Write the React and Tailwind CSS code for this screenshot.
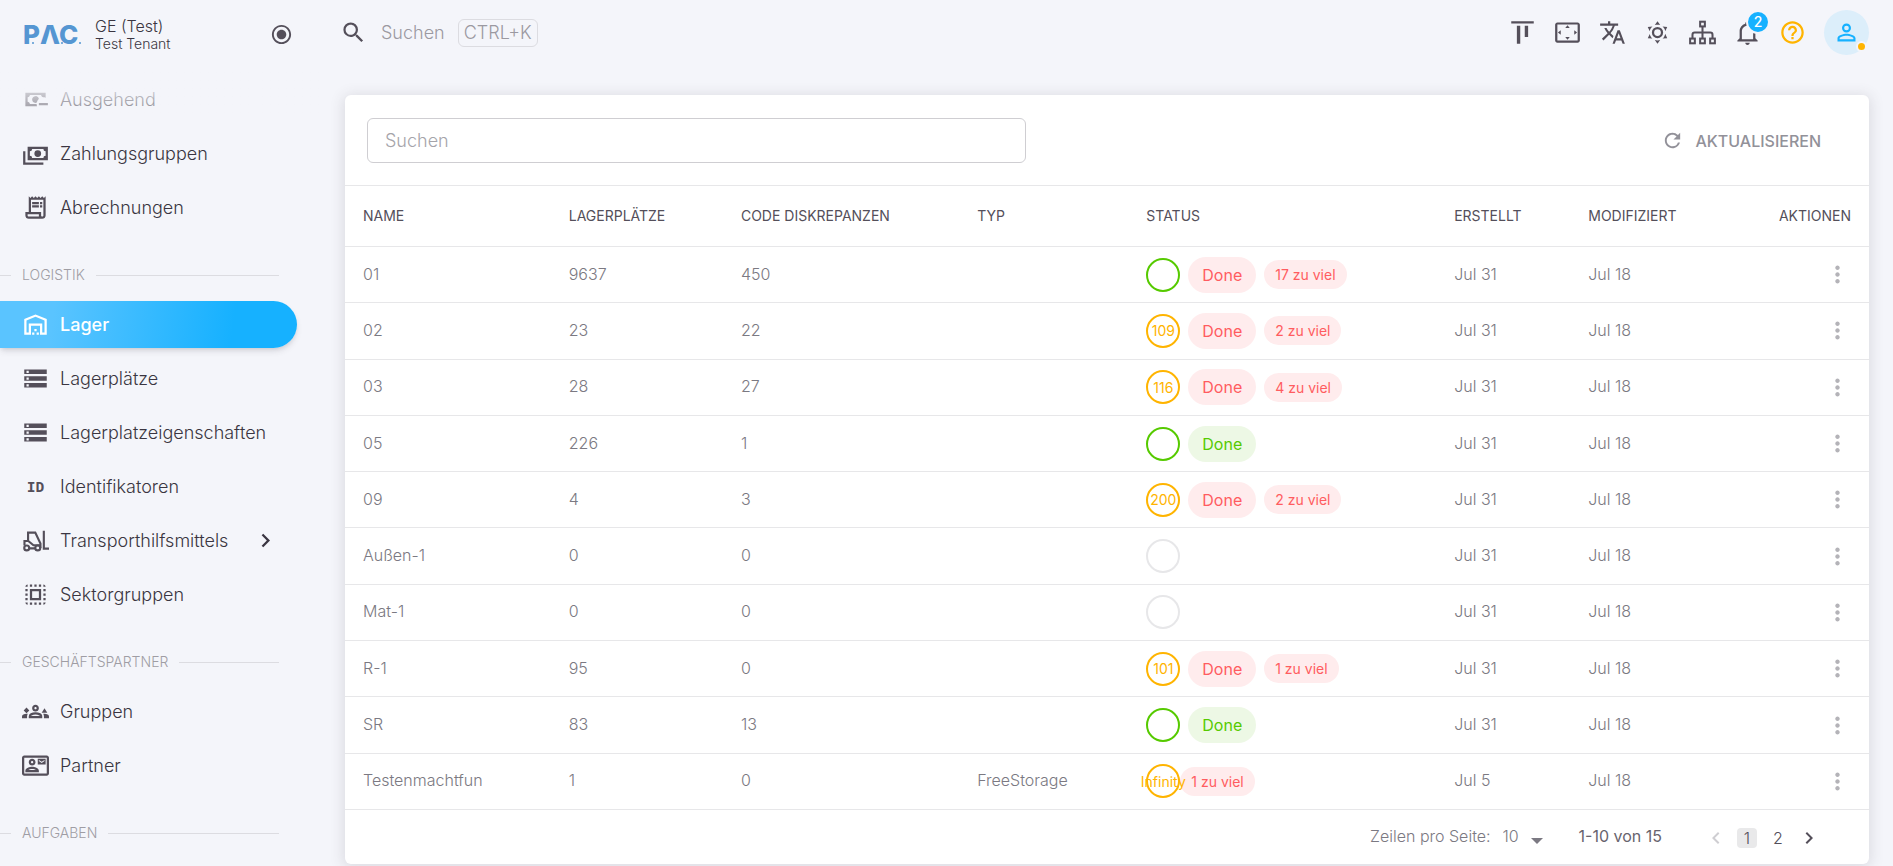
import React, { useState } from "react";
import {
  MdChevronLeft,
  MdChevronRight,
  MdHelpOutline,
  MdMoreVert,
  MdOutlineAlignVerticalTop,
  MdOutlineContactMail,
  MdOutlineGroups3,
  MdOutlineReceiptLong,
  MdOutlineSettingsOverscan,
  MdOutlineWarehouse,
  MdPersonOutline,
  MdRadioButtonChecked,
  MdRefresh,
  MdSearch,
  MdSelectAll,
  MdStorage,
  MdTranslate,
} from "react-icons/md";

function PathIcon({ d, className }) {
  return (
    <svg viewBox="0 0 24 24" fill="currentColor" className={className}>
      <path d={d} />
    </svg>
  );
}

function CashMinusIcon({ className }) {
  return (
    <PathIcon
      className={className}
      d="M15 15V17H23V15M14.97 11.61C14.85 10.28 13.59 8.97 12 9C10.3 9.03 9 10.3 9 12C9 13.7 10.3 14.94 12 15C12.38 15 12.77 14.92 13.14 14.77C13.41 13.67 13.86 12.63 14.97 11.61M13 16H7C7 14.9 6.1 14 5 14V10C6.1 10 7 9.1 7 8H17C17 9.1 17.9 10 19 10V10.06C19.67 10.06 20.34 10.18 21 10.4V6H3V18H13.32C13.1 17.33 13 16.66 13 16Z"
    />
  );
}

function CashMultipleIcon({ className }) {
  return (
    <PathIcon
      className={className}
      d="M5,6H23V18H5V6M14,9A3,3 0 0,1 17,12A3,3 0 0,1 14,15A3,3 0 0,1 11,12A3,3 0 0,1 14,9M9,8A2,2 0 0,1 7,10V14A2,2 0 0,1 9,16H19A2,2 0 0,1 21,14V10A2,2 0 0,1 19,8H9M1,10H3V20H19V22H1V10Z"
    />
  );
}

function SunIcon({ className }) {
  return (
    <PathIcon
      className={className}
      d="M12,7A5,5 0 0,1 17,12A5,5 0 0,1 12,17A5,5 0 0,1 7,12A5,5 0 0,1 12,7M12,9A3,3 0 0,0 9,12A3,3 0 0,0 12,15A3,3 0 0,0 15,12A3,3 0 0,0 12,9M12,2L14.39,5.42C13.65,5.15 12.84,5 12,5C11.16,5 10.35,5.15 9.61,5.42L12,2M3.34,7L7.5,6.65C6.9,7.16 6.36,7.78 5.94,8.5C5.5,9.24 5.25,10 5.11,10.79L3.34,7M3.36,17L5.12,13.23C5.26,14 5.53,14.78 5.95,15.5C6.37,16.24 6.91,16.86 7.5,17.37L3.36,17M20.65,7L18.88,10.79C18.74,10 18.47,9.23 18.05,8.5C17.63,7.78 17.1,7.15 16.5,6.64L20.65,7M20.64,17L16.5,17.36C17.09,16.85 17.62,16.22 18.04,15.5C18.46,14.77 18.73,14 18.87,13.21L20.64,17M12,22L9.59,18.56C10.33,18.83 11.14,19 12,19C12.82,19 13.63,18.83 14.37,18.56L12,22Z"
    />
  );
}

function BellIcon({ className }) {
  return (
    <PathIcon
      className={className}
      d="M10 21H14C14 22.1 13.1 23 12 23S10 22.1 10 21M21 19V20H3V19L5 17V11C5 7.9 7 5.2 10 4.3V4C10 2.9 10.9 2 12 2S14 2.9 14 4V4.3C17 5.2 19 7.9 19 11V17L21 19M17 11C17 8.2 14.8 6 12 6S7 8.2 7 11V18H17V11Z"
    />
  );
}

function SitemapIcon({ className }) {
  return (
    <svg
      viewBox="0 0 24 24"
      fill="none"
      stroke="currentColor"
      strokeWidth="1.8"
      className={className}
    >
      <rect x="9.9" y="2.4" width="4.2" height="4.2" />
      <rect x="1" y="17.4" width="4.2" height="4.2" />
      <rect x="9.9" y="17.4" width="4.2" height="4.2" />
      <rect x="18.8" y="17.4" width="4.2" height="4.2" />
      <path d="M12 6.6v10.8M3.1 17.4V14q0-2 2-2h13.8q2 0 2 2v3.4" />
    </svg>
  );
}

function ForkliftIcon({ className }) {
  return (
    <svg
      viewBox="0 0 24 24"
      fill="none"
      stroke="currentColor"
      strokeWidth="1.9"
      className={className}
    >
      <circle cx="4.2" cy="18.6" r="2.2" />
      <circle cx="14" cy="18.6" r="2.2" />
      <path d="M6.4 19h5.4M2.2 16.4v-4h3.4l4.6 3.8h6.2v2.4M5.4 12V5h6.4l4.6 9.6v1.6" />
      <path d="M19.4 3.4v15.8H24" />
    </svg>
  );
}

function IdentifierIcon({ className }) {
  return (
    <svg viewBox="0 0 24 24" fill="currentColor" className={className}>
      <text
        x="12"
        y="17"
        textAnchor="middle"
        fontFamily="DejaVu Sans Mono, monospace"
        fontWeight="700"
        fontSize="13"
      >
        ID
      </text>
    </svg>
  );
}

function Logo() {
  return (
    <svg
      viewBox="0 0 62 36"
      role="img"
      aria-label="PAC"
      fill="#5596d2"
      className="h-9 w-[62px] shrink-0"
      fontFamily="Inter, sans-serif"
      fontWeight="800"
      fontSize="26"
    >
      <text x="1" y="27">P</text>
      <text x="18" y="27">Λ</text>
      <text x="37" y="27">C</text>
      <circle cx="11" cy="26" r="1" />
      <circle cx="40" cy="26" r="1" />
      <circle cx="58" cy="26" r="1" />
    </svg>
  );
}

const navGroups = [
  {
    items: [
      { label: "Ausgehend", icon: CashMinusIcon },
      { label: "Zahlungsgruppen", icon: CashMultipleIcon },
      { label: "Abrechnungen", icon: MdOutlineReceiptLong },
    ],
  },
  {
    title: "Logistik",
    items: [
      { label: "Lager", icon: MdOutlineWarehouse, active: true },
      { label: "Lagerplätze", icon: MdStorage },
      { label: "Lagerplatzeigenschaften", icon: MdStorage },
      { label: "Identifikatoren", icon: IdentifierIcon },
      { label: "Transporthilfsmittels", icon: ForkliftIcon, nested: true },
      { label: "Sektorgruppen", icon: MdSelectAll },
    ],
  },
  {
    title: "Geschäftspartner",
    items: [
      { label: "Gruppen", icon: MdOutlineGroups3 },
      { label: "Partner", icon: MdOutlineContactMail },
    ],
  },
  { title: "Aufgaben", items: [] },
];

const rows = [
  { name: "01", places: 9637, diff: 450, ring: "ok", done: "error", extra: "17 zu viel" },
  { name: "02", places: 23, diff: 22, ring: "warn", value: "109", done: "error", extra: "2 zu viel" },
  { name: "03", places: 28, diff: 27, ring: "warn", value: "116", done: "error", extra: "4 zu viel" },
  { name: "05", places: 226, diff: 1, ring: "ok", done: "success" },
  { name: "09", places: 4, diff: 3, ring: "warn", value: "200", done: "error", extra: "2 zu viel" },
  { name: "Außen-1", places: 0, diff: 0, ring: "none" },
  { name: "Mat-1", places: 0, diff: 0, ring: "none" },
  { name: "R-1", places: 95, diff: 0, ring: "warn", value: "101", done: "error", extra: "1 zu viel" },
  { name: "SR", places: 83, diff: 13, ring: "ok", done: "success" },
  {
    name: "Testenmachtfun",
    places: 1,
    diff: 0,
    type: "FreeStorage",
    ring: "warn",
    value: "Infinity",
    extra: "1 zu viel",
    created: "Jul 5",
  },
];

const ringStyles = {
  ok: "border-[#56ca00]",
  warn: "border-[#ffb400]",
  none: "border-[#e7e7e9]",
};

const doneStyles = {
  error: "bg-[#ffeced] text-[#ff5c60]",
  success: "bg-[#edf8e5] text-[#56ca00]",
};

function NavItem({ item }) {
  const Icon = item.icon;

  return (
    <a
      href="#"
      className={`mt-[7px] flex h-[47px] w-[297px] items-center rounded-r-full pl-[22px] pr-[18px] ${
        item.active
          ? "bg-[linear-gradient(98deg,#5ac4ff_18%,#16b1ff_78%)] font-medium text-white shadow-md shadow-[#3a3541]/15"
          : "font-light text-[#3a3541]"
      }`}
    >
      <Icon
        className={`h-[27px] w-[27px] shrink-0 ${item.active ? "" : "text-[#544f5a]"}`}
      />
      <span className="ml-[11px] flex-1 whitespace-nowrap text-[18px] leading-6">
        {item.label}
      </span>
      {item.nested && <MdChevronRight className="h-[27px] w-[27px] shrink-0" />}
    </a>
  );
}

function SectionHeading({ title }) {
  return (
    <div className="flex w-[279px] items-center gap-[11px] pb-[5px] pt-[30px]">
      <span className="h-px w-[11px] bg-[#dcdce1]" />
      <span className="text-[14px] font-light uppercase leading-7 text-[#9f9da4]">{title}</span>
      <span className="h-px flex-1 bg-[#dcdce1]" />
    </div>
  );
}

function Sidebar() {
  return (
    <aside className="flex w-80 shrink-0 flex-col overflow-hidden">
      <div className="flex h-[69px] shrink-0 items-center pl-[22px] pr-[27px]">
        <Logo />
        <div className="ml-[11px] flex-1 font-light text-[#3a3541]">
          <p className="text-[16px] leading-[18px]">GE (Test)</p>
          <p className="text-[14px] leading-[18px]">Test Tenant</p>
        </div>
        <button type="button" aria-label="Menü fixieren" className="text-[#544f5a]">
          <MdRadioButtonChecked className="h-[23px] w-[23px]" />
        </button>
      </div>

      <nav className="relative min-h-0 flex-1 overflow-hidden">
        {navGroups.map((group, index) => (
          <div key={index}>
            {group.title && <SectionHeading title={group.title} />}
            {group.items.map((item) => (
              <NavItem key={item.label} item={item} />
            ))}
          </div>
        ))}
        <div className="pointer-events-none absolute inset-x-0 top-0 h-14 bg-linear-to-b from-[#f4f5fa] from-15% to-[#f4f5fa]/20" />
      </nav>
    </aside>
  );
}

function IconButton({ label, icon: Icon, color = "text-[#544f5a]", className = "", children }) {
  return (
    <button
      type="button"
      aria-label={label}
      className={`relative flex h-[45px] w-[45px] items-center justify-center ${color} ${className}`}
    >
      <Icon className="h-[27px] w-[27px]" />
      {children}
    </button>
  );
}

function TopBar() {
  return (
    <header className="flex h-[65px] shrink-0 items-center justify-between">
      <button
        type="button"
        className="-ml-[5px] flex items-center text-[18px] font-light text-[#9b99a1]"
      >
        <MdSearch className="h-[27px] w-[27px] text-[#544f5a]" />
        <span className="ml-[14px]">Suchen</span>
        <kbd className="ml-[13px] rounded-md border border-[#dcdce1] px-[5px] font-[Inter,sans-serif] leading-[26px]">
          CTRL+K
        </kbd>
      </button>

      <div className="flex items-center">
        <IconButton label="Ausrichtung" icon={MdOutlineAlignVerticalTop} />
        <IconButton label="Vollbild" icon={MdOutlineSettingsOverscan} />
        <IconButton label="Sprache" icon={MdTranslate} />
        <IconButton label="Design" icon={SunIcon} />
        <IconButton label="Struktur" icon={SitemapIcon} />
        <IconButton label="Benachrichtigungen" icon={BellIcon}>
          <span className="absolute right-0 top-0 flex h-6 w-6 items-center justify-center rounded-full border-2 border-[#f4f5fa] bg-[#16b1ff] text-[14px] font-medium leading-none text-white">
            2
          </span>
        </IconButton>
        <IconButton label="Hilfe" icon={MdHelpOutline} color="text-[#ffb400]" />
        <IconButton
          label="Profil"
          icon={MdPersonOutline}
          color="text-[#16b1ff]"
          className="ml-[9px] rounded-full bg-[#dceefa]"
        >
          <span className="absolute bottom-[3px] right-[2px] h-[11px] w-[11px] rounded-full border-2 border-[#f4f5fa] bg-[#ffb400]" />
        </IconButton>
      </div>
    </header>
  );
}

function StatusCell({ row }) {
  return (
    <div className="flex items-center">
      <span
        className={`relative z-10 flex h-[34px] w-[34px] shrink-0 items-center justify-center rounded-full border-2 text-[14px] text-[#ffb400] ${ringStyles[row.ring]}`}
      >
        {row.value}
      </span>
      {row.done && (
        <span
          className={`mx-2 rounded-full px-[14px] text-[16px] leading-9 ${doneStyles[row.done]}`}
        >
          Done
        </span>
      )}
      {row.extra && (
        <span className="whitespace-nowrap rounded-full bg-[#ffeced] px-[11px] text-[14px] leading-[29px] text-[#ff5c60]">
          {row.extra}
        </span>
      )}
    </div>
  );
}

function StorageTable() {
  return (
    <table className="h-[624px] w-full table-fixed border-separate border-spacing-0 text-left">
      <thead>
        <tr className="h-[61px] text-[14px] uppercase text-[#544f5a] [&>th]:border-b [&>th]:border-[#e7e7e9] [&>th]:px-[18px] [&>th]:pb-[2px] [&>th]:font-normal">
          <th className="w-[13.5%]">Name</th>
          <th className="w-[11.3%]">Lagerplätze</th>
          <th className="w-[15.5%]">Code Diskrepanzen</th>
          <th className="w-[11.1%]">Typ</th>
          <th className="w-[20.2%]">Status</th>
          <th className="w-[8.8%]">Erstellt</th>
          <th>Modifiziert</th>
          <th className="text-right">Aktionen</th>
        </tr>
      </thead>
      <tbody>
        {rows.map((row) => (
          <tr
            key={row.name}
            className="h-14 text-[16px] font-light text-[#7b7982] [&>td]:border-b [&>td]:border-[#e7e7e9] [&>td]:px-[18px]"
          >
            <td className="pb-[2px]">{row.name}</td>
            <td className="pb-[2px]">{row.places}</td>
            <td className="pb-[2px]">{row.diff}</td>
            <td className="pb-[2px]">{row.type}</td>
            <td className="font-normal">
              <StatusCell row={row} />
            </td>
            <td className="pb-[2px]">{row.created || "Jul 31"}</td>
            <td className="pb-[2px]">Jul 18</td>
            <td>
              <button
                type="button"
                aria-label={`Aktionen für ${row.name}`}
                className="ml-auto block text-[#b4b3b8]"
              >
                <MdMoreVert className="h-[27px] w-[27px]" />
              </button>
            </td>
          </tr>
        ))}
      </tbody>
    </table>
  );
}

function Pagination() {
  const [pageSize, setPageSize] = useState("10");

  return (
    <div className="flex h-[54px] items-center justify-end pb-[3px] pr-[48px] text-[16px] text-[#544f5a]">
      <label htmlFor="page-size" className="font-light text-[#7b7982]">
        Zeilen pro Seite:
      </label>
      <div className="relative ml-3 flex items-center text-[#7b7982]">
        <select
          id="page-size"
          value={pageSize}
          onChange={(event) => setPageSize(event.target.value)}
          className="w-11 appearance-none bg-transparent font-light outline-none"
        >
          <option>10</option>
          <option>25</option>
          <option>50</option>
        </select>
        <svg
          viewBox="0 0 12 6"
          fill="currentColor"
          className="pointer-events-none absolute right-1 top-[14px] h-[6px] w-3"
        >
          <path d="M0 0h12L6 6z" />
        </svg>
      </div>
      <span className="ml-8 text-[#68646e]">1-10 von 15</span>
      <div className="ml-[42px] flex items-center gap-[9px] pt-1">
        <button type="button" aria-label="Vorherige Seite" className="text-[#cfced2]">
          <MdChevronLeft className="h-6 w-6" />
        </button>
        <div className="flex gap-[11px] text-center text-[16px] font-light leading-5">
          <button type="button" className="h-5 w-5 rounded-sm bg-[#e9e9ea]">
            1
          </button>
          <button type="button" className="h-5 w-5">
            2
          </button>
        </div>
        <button type="button" aria-label="Nächste Seite">
          <MdChevronRight className="h-6 w-6" />
        </button>
      </div>
    </div>
  );
}

export default function App() {
  return (
    <div className="flex h-screen overflow-hidden bg-[#f4f5fa] font-[Inter,sans-serif] text-[#3a3541]">
      <Sidebar />

      <div className="flex min-w-0 flex-1 flex-col pl-[25px] pr-6">
        <TopBar />

        <main className="mt-[30px]">
          <section className="rounded-md bg-white shadow-[0_2px_14px_2px_rgba(58,53,65,0.13)]">
            <div className="flex items-center justify-between border-b border-[#e7e7e9] px-[22px] pb-[22px] pt-[23px]">
              <input
                type="text"
                aria-label="Suchen"
                placeholder="Suchen"
                className="h-[45px] w-[44.5%] rounded-md border border-[#cfced2] px-[17px] text-[18px] font-light outline-none placeholder:text-[#a5a4aa]"
              />
              <button
                type="button"
                className="mr-[26px] flex items-center gap-[11px] text-[16px] font-medium uppercase text-[#929199]"
              >
                <MdRefresh className="h-[23px] w-[23px]" />
                Aktualisieren
              </button>
            </div>

            <StorageTable />
            <Pagination />
          </section>
        </main>
      </div>
    </div>
  );
}
